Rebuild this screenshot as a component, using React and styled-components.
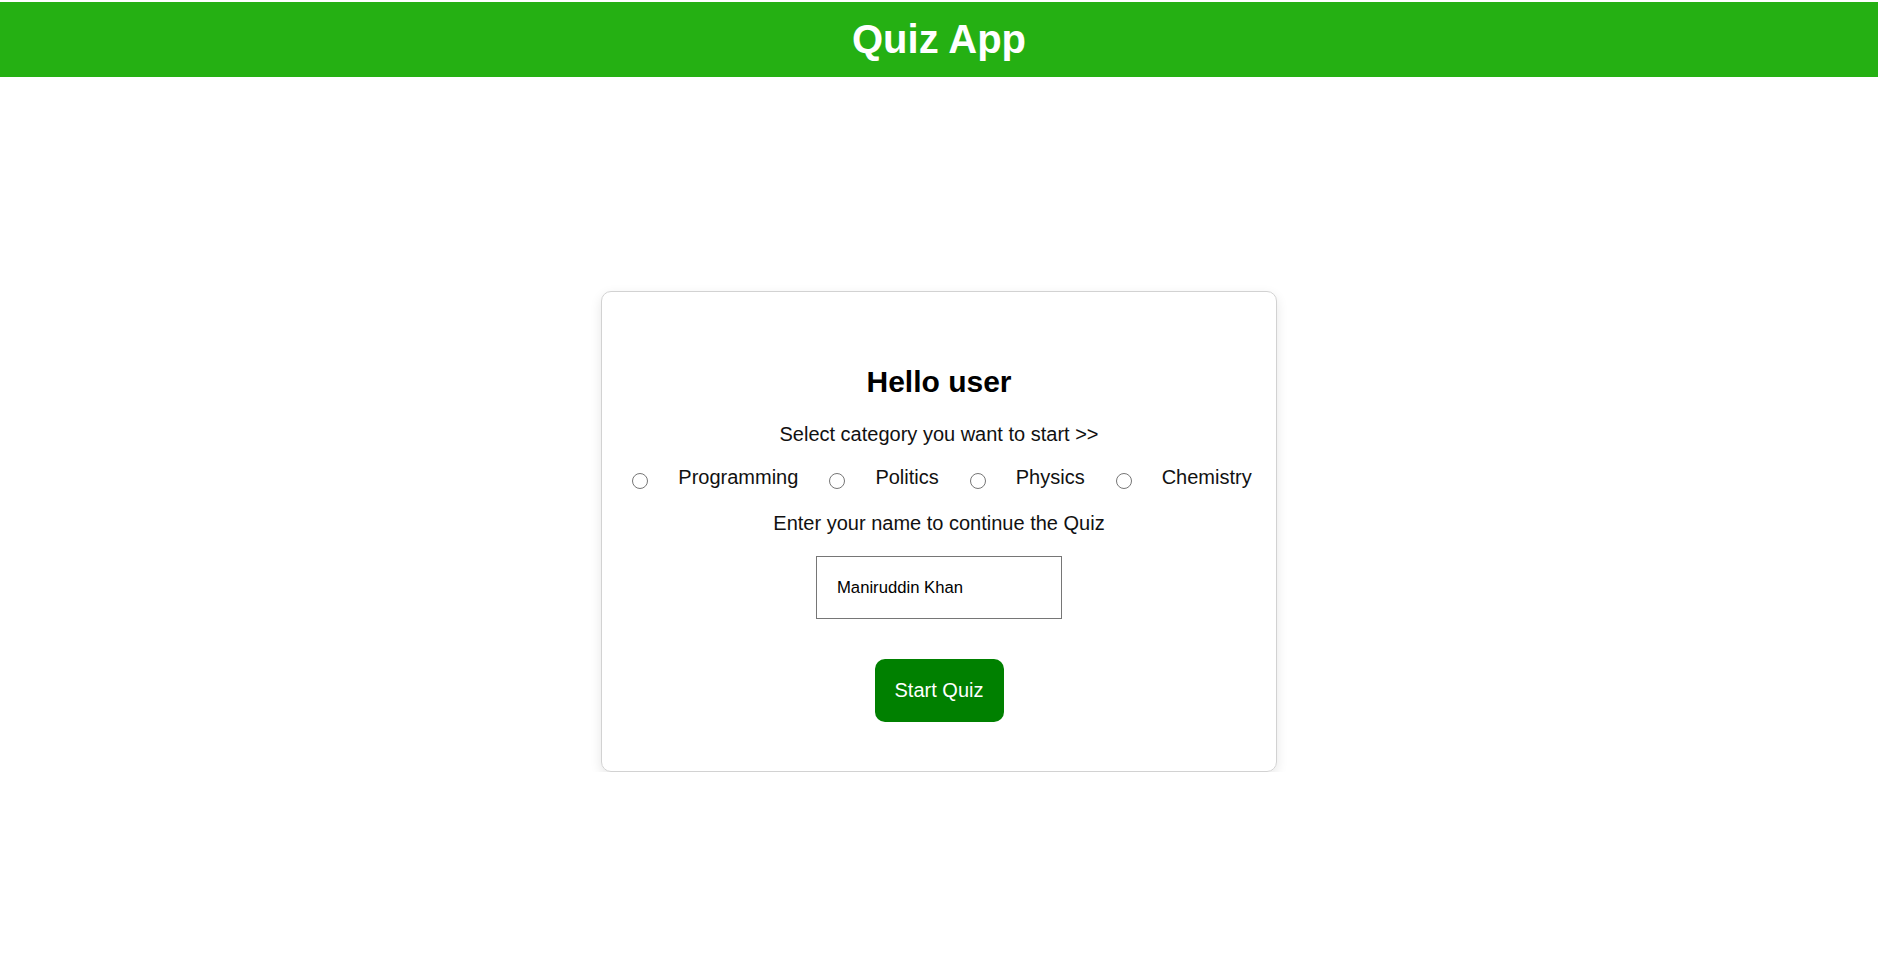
import React, { useState } from 'react';
import styled, { createGlobalStyle } from 'styled-components';

const GlobalStyle = createGlobalStyle`
  html, body {
    margin: 0;
    padding: 0;
    background: #ffffff;
    font-family: "Liberation Sans", Arial, sans-serif;
    color: #111111;
  }
`;

const Page = styled.div`
  padding-top: 2px;
  padding-right: 4px;
`;

const Header = styled.header`
  background: #25b013;
  height: 75px;
  display: flex;
  align-items: center;
  justify-content: center;

  h1 {
    margin: 0;
    color: #ffffff;
    font-size: 40px;
    font-weight: 700;
  }
`;

const Main = styled.main`
  display: flex;
  justify-content: center;
  padding-top: 214px;
`;

const Card = styled.div`
  width: 676px;
  box-sizing: border-box;
  border: 1px solid #d2d2d2;
  border-radius: 10px;
  box-shadow: 0 4px 12px rgba(0, 0, 0, 0.1);
  padding: 73px 0 49px;
  display: flex;
  flex-direction: column;
  align-items: center;
`;

const Title = styled.h2`
  margin: 0;
  font-size: 30px;
  line-height: 34px;
  font-weight: 700;
  color: #000000;
`;

const Text = styled.p`
  margin: ${p => p.$top}px 0 0;
  font-size: 20px;
  line-height: 23px;
`;

const Options = styled.div`
  margin-top: 20px;
  display: flex;
  align-items: center;
  gap: 25px;
`;

const Option = styled.label`
  display: flex;
  align-items: center;
  font-size: 20px;
  line-height: 23px;

  input {
    width: 16px;
    height: 16px;
    margin: 6px 30px 0 6px;
  }
`;

const NameInput = styled.input`
  margin-top: 21px;
  width: 246px;
  height: 63px;
  box-sizing: border-box;
  border: 1px solid #767676;
  padding: 0 20px;
  font-family: "Liberation Sans", Arial, sans-serif;
  font-size: 16.67px;
  color: #000000;
  outline: none;
`;

const StartButton = styled.button`
  margin-top: 40px;
  width: 129px;
  height: 63px;
  border: none;
  border-radius: 10px;
  background: #008000;
  color: #ffffff;
  font-family: "Liberation Sans", Arial, sans-serif;
  font-size: 20px;
  cursor: pointer;
`;

const categories = ['Programming', 'Politics', 'Physics', 'Chemistry'];

export default function App() {
  const [name, setName] = useState('Maniruddin Khan');
  const [category, setCategory] = useState('');

  return (
    <Page>
      <GlobalStyle />
      <Header>
        <h1>Quiz App</h1>
      </Header>
      <Main>
        <Card>
          <Title>Hello user</Title>
          <Text $top={24}>Select category you want to start &gt;&gt;</Text>
          <Options>
            {categories.map(c => (
              <Option key={c}>
                <input
                  type="radio"
                  name="category"
                  checked={category === c}
                  onChange={() => setCategory(c)}
                />
                {c}
              </Option>
            ))}
          </Options>
          <Text $top={23}>Enter your name to continue the Quiz</Text>
          <NameInput value={name} onChange={e => setName(e.target.value)} />
          <StartButton>Start Quiz</StartButton>
        </Card>
      </Main>
    </Page>
  );
}
